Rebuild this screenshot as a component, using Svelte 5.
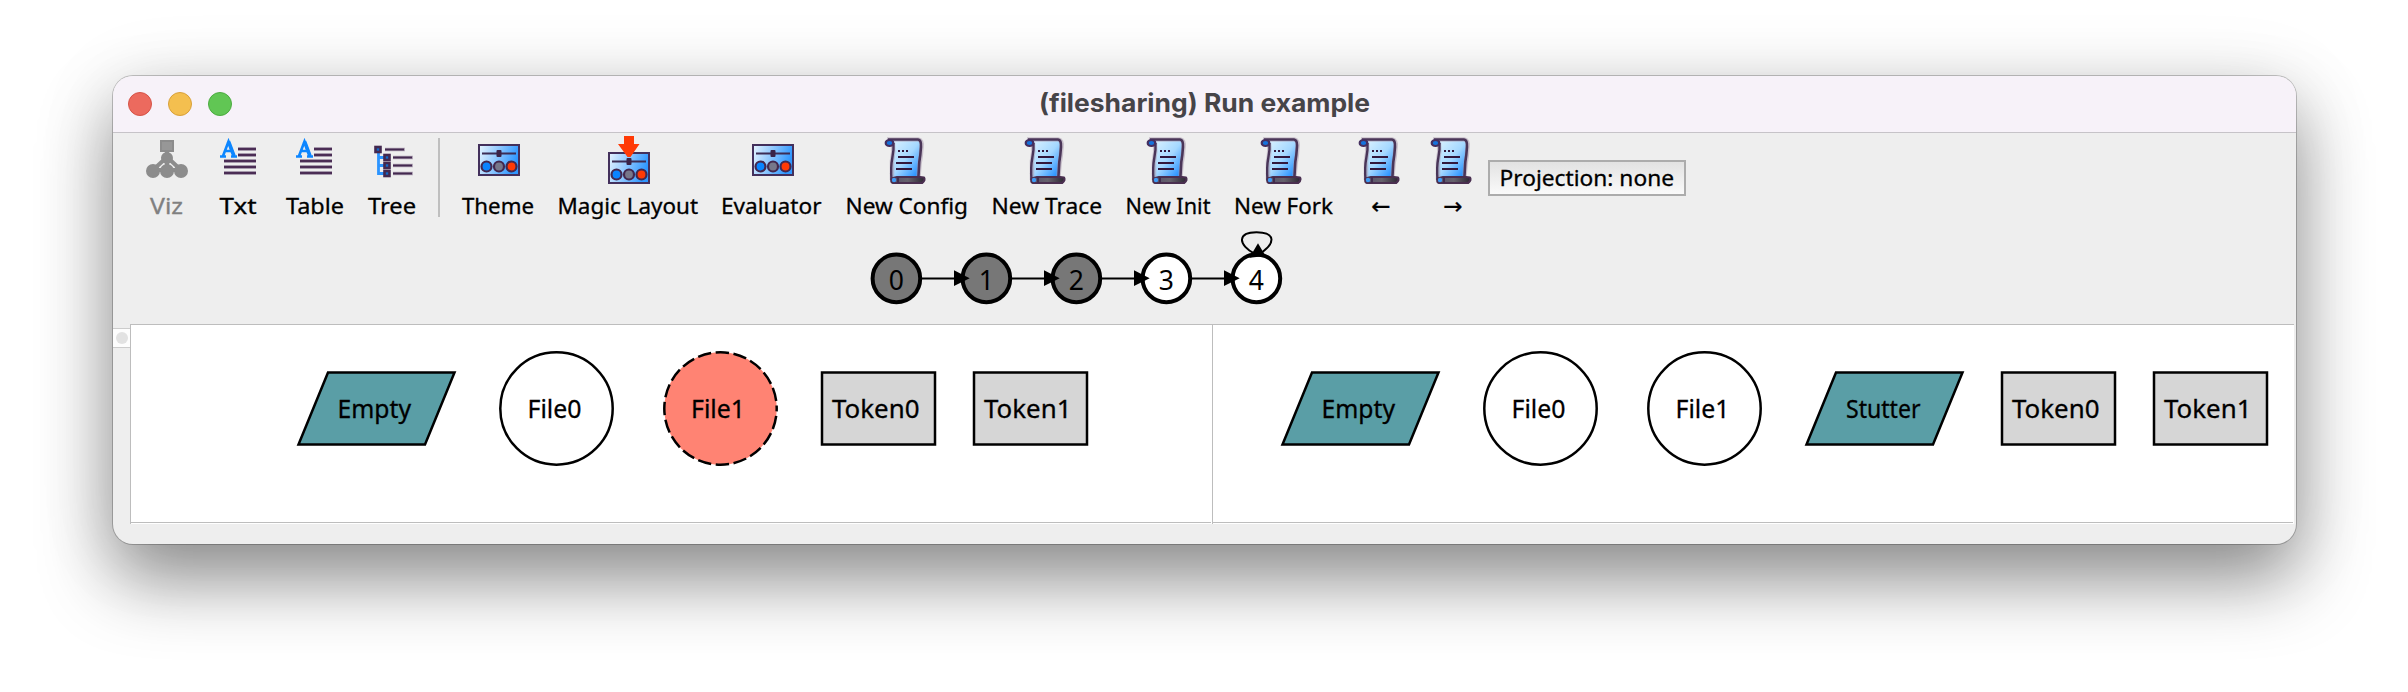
<script>
  const tools = [
    { label: 'Viz', icon: 'viz', x: 140, w: 68, ix: 146, tx: 150, tw: 33, disabled: true },
    { label: 'Txt', icon: 'txt', x: 208, w: 68, ix: 220, tx: 219.5, tw: 37 },
    { label: 'Table', icon: 'txt', x: 276, w: 80, ix: 296, tx: 286, tw: 58 },
    { label: 'Tree', icon: 'tree', x: 356, w: 72, ix: 374, tx: 368, tw: 48 },
    { sep: true, x: 428, w: 22 },
    { label: 'Theme', icon: 'panel', x: 450, w: 98, ix: 478, tx: 462, tw: 72 },
    { label: 'Magic Layout', icon: 'magic', x: 548, w: 162, ix: 608, tx: 557.5, tw: 140.5 },
    { label: 'Evaluator', icon: 'panel', x: 710, w: 124, ix: 752, tx: 721, tw: 100.5 },
    { label: 'New Config', icon: 'scroll', x: 834, w: 146, ix: 880, tx: 845.5, tw: 122.5 },
    { label: 'New Trace', icon: 'scroll', x: 980, w: 134, ix: 1020, tx: 991.5, tw: 110.5 },
    { label: 'New Init', icon: 'scroll', x: 1114, w: 108, ix: 1142, tx: 1125.5, tw: 85 },
    { label: 'New Fork', icon: 'scroll', x: 1222, w: 124, ix: 1256, tx: 1234, tw: 99 },
    { label: '←', icon: 'scroll', x: 1346, w: 72, ix: 1354, arrow: 1372 },
    { label: '→', icon: 'scroll', x: 1418, w: 70, ix: 1426, arrow: 1444 }
  ];

  const states = [0, 1, 2, 3, 4];

  const left = [
    { kind: 'para', x: 298.5, label: 'Empty', tx: 337.5, tw: 73.5 },
    { kind: 'circle', x: 556.5, label: 'File0', tx: 527.5, tw: 54 },
    { kind: 'circle', x: 720.5, label: 'File1', tx: 691, tw: 54, dashed: true },
    { kind: 'box', x: 822, label: 'Token0', tx: 832, tw: 87.5 },
    { kind: 'box', x: 974, label: 'Token1', tx: 984, tw: 87.5 }
  ];
  const right = [
    { kind: 'para', x: 1282.5, label: 'Empty', tx: 1321.5, tw: 73.5 },
    { kind: 'circle', x: 1540.5, label: 'File0', tx: 1511.5, tw: 54 },
    { kind: 'circle', x: 1704.5, label: 'File1', tx: 1675.5, tw: 54 },
    { kind: 'para', x: 1806.5, label: 'Stutter', tx: 1846, tw: 74.5 },
    { kind: 'box', x: 2002, label: 'Token0', tx: 2012, tw: 87.5 },
    { kind: 'box', x: 2154, label: 'Token1', tx: 2164, tw: 87.5 }
  ];
</script>

{#snippet panelIcon()}
  <rect x="1" y="1" width="40" height="30" fill="url(#sky)" stroke="#43305c" stroke-width="2" />
  <path d="M4 9.5H38" stroke="#3c2d55" stroke-width="2.2" />
  <rect x="18.5" y="6" width="5" height="7" rx="1" fill="#3a2347" />
  <circle cx="8.5" cy="22.5" r="5" fill="#0a84ff" stroke="#43284f" stroke-width="2.2" />
  <circle cx="21" cy="22.5" r="5" fill="#77778a" stroke="#43284f" stroke-width="2.2" />
  <circle cx="33.5" cy="22.5" r="5" fill="#ff3a06" stroke="#43284f" stroke-width="2.2" />
{/snippet}

{#snippet icon(name)}
  {#if name === 'viz'}
    <g transform="translate(0 7)" fill="#8c8c8c" stroke="#8c8c8c">
      <rect x="15" y="1" width="12" height="10" stroke-width="2" fill="#979797" />
      <path d="M21 11V26M21 17L7 30M21 17L35 30M7 30H35" stroke-width="4" fill="none" />
      <circle cx="21" cy="18" r="5" stroke-width="2" />
      <circle cx="7" cy="31" r="6" stroke-width="2" />
      <circle cx="21" cy="31" r="6" stroke-width="2" />
      <circle cx="35" cy="31" r="6" stroke-width="2" />
    </g>
  {:else if name === 'txt'}
    <g transform="translate(0 7)" fill="none">
      <path d="M18 9H36M18 15H36M4 21H36M4 27H36M4 33H36" stroke="#a79bad" stroke-width="4" />
      <path d="M18 9H36M18 15H36M4 21H36M4 27H36M4 33H36" stroke="#4b2d55" stroke-width="2" />
      <path d="M3 16L8.5 1.5L14 16M5 11H12M0 16.5H6M11 16.5H17" stroke="#0d86ff" stroke-width="2.6" />
      <path d="M8.5 1.5L14 16" stroke="#0d86ff" stroke-width="3.6" />
    </g>
  {:else if name === 'tree'}
    <g transform="translate(0 11)" fill="none">
      <path d="M11 5.5H31M19 13.5H39M19 21.5H39M19 29.5H39" stroke="#b2a7b8" stroke-width="3.6" />
      <path d="M11 5.5H30M19 13.5H38M19 21.5H38M19 29.5H38" stroke="#43284f" stroke-width="2" />
      <path d="M4.5 9V31M4 13.5H11M4 21.5H11M4 29.5H11" stroke="#2b94ff" stroke-width="2.8" />
      <rect x="1.5" y="3" width="5" height="5" fill="#1268c8" stroke="#43284f" stroke-width="2.6" />
      <rect x="10.5" y="11" width="5" height="5" fill="#1268c8" stroke="#43284f" stroke-width="2.6" />
      <rect x="10.5" y="19" width="5" height="5" fill="#1268c8" stroke="#43284f" stroke-width="2.6" />
      <rect x="10.5" y="27" width="5" height="5" fill="#1268c8" stroke="#43284f" stroke-width="2.6" />
    </g>
  {:else if name === 'panel'}
    <g transform="translate(0 11)">{@render panelIcon()}</g>
  {:else if name === 'magic'}
    <g transform="translate(0 19)">{@render panelIcon()}</g>
    <path d="M16 3H26V11H31.5L22.5 24H19.5L10 11H16Z" fill="#ff3a06" />
  {:else if name === 'scroll'}
    <g transform="translate(0 1)">
      <path d="M8 5.5H38Q42 6 41.500 12Q41.200 20 40 27L38 43H12L11.500 30L13.500 10Z" fill="url(#paper)" />
      <path d="M7 5.500H38Q42.500 6 41.500 13Q41 22 39.500 30L38.500 42M13 9Q14 18 12 27V46" fill="none" stroke="#a99aae" stroke-width="4.500" opacity="0.55" />
      <path d="M8 5.500H38Q41.500 6 41 13Q40.500 21 39.300 28L38.500 42" fill="none" stroke="#4a3558" stroke-width="2.600" stroke-linejoin="round" />
      <path d="M13.500 9Q14 16 12.300 24Q10.500 33 11.500 46" fill="none" stroke="#4a3558" stroke-width="2.400" />
      <ellipse cx="9.500" cy="9" rx="3.800" ry="3" fill="#1673dd" stroke="#453060" stroke-width="2.200" />
      <path d="M17 43H40L44 43.500Q45.500 46.500 42 49H13Q10.500 48 11.500 44.500Z" fill="url(#roll)" stroke="#4a2f50" stroke-width="2.200" stroke-linejoin="round" />
      <circle cx="14" cy="46" r="2.200" fill="#3e9bf5" />
      <path d="M18 43.500V48.500" stroke="#3a2347" stroke-width="1.600" />
      <path d="M18 17H20M22 17H24M26 17H28M18 23H34M16 29H32M16 35H32" stroke="#32183c" stroke-width="2" />
    </g>
  {/if}
{/snippet}

{#snippet node(n)}
  {#if n.kind === 'para'}
    <path d="M{n.x + 29.5} 372.5H{n.x + 156}L{n.x + 126.500} 444.5H{n.x}Z" fill="#5a9ea6" class="outline" />
  {:else if n.kind === 'circle'}
    <circle cx={n.x} cy="408.500" r="56.2" fill={n.dashed ? '#ff8373' : '#fff'} class="outline" class:dashed={n.dashed} />
  {:else}
    <rect x={n.x} y="372.5" width="113" height="72" fill="#d6d6d6" class="outline" />
  {/if}
  <text x={n.tx} y="417.7" textLength={n.tw} lengthAdjust="spacingAndGlyphs" class="nodetext">{n.label}</text>
{/snippet}

<svg class="defs" width="0" height="0" aria-hidden="true">
  <defs>
    <linearGradient id="sky" x1="0" y1="0" x2="1" y2="0.25">
      <stop offset="0" stop-color="#e8f5ff" />
      <stop offset="0.5" stop-color="#8fc8ff" />
      <stop offset="1" stop-color="#2f97ff" />
    </linearGradient>
    <linearGradient id="paper" x1="0.1" y1="0.1" x2="1" y2="0.9">
      <stop offset="0" stop-color="#d8f1ff" />
      <stop offset="0.5" stop-color="#a5d8ff" />
      <stop offset="1" stop-color="#1688ff" />
    </linearGradient>
    <linearGradient id="roll" x1="0" y1="0" x2="1" y2="0">
      <stop offset="0" stop-color="#55506a" />
      <stop offset="0.5" stop-color="#66626c" />
      <stop offset="1" stop-color="#2d2733" />
    </linearGradient>
  </defs>
</svg>

<main class="desktop">
  <section class="window">
    <header class="titlebar">
      <div class="lights"><i class="close"></i><i class="min"></i><i class="max"></i></div>
      <svg class="title" width="340" height="56"><text x="5" y="35.700" textLength="331" lengthAdjust="spacingAndGlyphs">(filesharing) Run example</text></svg>
    </header>

    <nav class="toolbar">
      {#each tools as t}
        {#if t.sep}
          <span class="sep"></span>
        {:else}
          <button class="tool" class:disabled={t.disabled} aria-label={t.label}>
            <svg width={t.w} height="90" viewBox="{t.x} 0 {t.w} 90">
              <g transform="translate({t.ix} 0)">{@render icon(t.icon)}</g>
              {#if t.arrow}
                <text x={t.arrow + 9} y="81" text-anchor="middle" class="arrow">{t.label}</text>
              {:else}
                <text x={t.tx} y="80.800" textLength={t.tw} lengthAdjust="spacingAndGlyphs">{t.label}</text>
              {/if}
            </svg>
          </button>
        {/if}
      {/each}
      <button class="projection" aria-label="Projection: none">
        <svg width="194" height="32"><text x="9.500" y="23.600" textLength="174.500" lengthAdjust="spacingAndGlyphs">Projection: none</text></svg>
      </button>
    </nav>

    <div class="trace">
      <svg width="440" height="100" viewBox="860 223 440 100">
        {#each states as s}
          <circle cx={896.4 + s * 90} cy="278.400" r="23.8" fill={s < 3 ? '#777' : '#fff'} stroke="#000" stroke-width="4" />
          <text x={896.4 + s * 90} y="290" text-anchor="middle">{s}</text>
        {/each}
        {#each states.slice(1) as s}
          <path d="M{832 + s * 90} 278.500H{866 + s * 90}" stroke="#000" stroke-width="2" />
          <path d="M{864 + s * 90} 270.200L{879.700 + s * 90} 278.200L{864 + s * 90} 286Z" />
        {/each}
        <path d="M1255 254C1247 250 1241.500 244 1242 239.500C1242.500 234 1248 232.200 1256.500 232.200C1265 232.200 1271 234 1271.500 239.500C1271.500 245 1266 249 1260 254" fill="none" stroke="#000" stroke-width="2" />
        <path d="M1258 243.200L1265.500 256L1249.500 257.700Z" />
      </svg>
    </div>

    <div class="body">
      <aside class="rail"><span class="handle"><i></i></span></aside>
      <div class="pane first">
        <svg width="1080" height="197" viewBox="131 325 1080 197">
          {#each left as n}{@render node(n)}{/each}
        </svg>
      </div>
      <div class="pane">
        <svg width="1080" height="197" viewBox="1213 325 1080 197">
          {#each right as n}{@render node(n)}{/each}
        </svg>
      </div>
    </div>
  </section>
</main>

<style>
  :global(body) { background: #fff; overflow: hidden; }
  .defs { position: absolute; }
  svg { display: block; }
  .desktop {
    box-sizing: border-box;
    width: 2408px;
    height: 692px;
    padding: 76px 112px 0 113px;
    overflow: hidden;
    font-family: "Noto Sans", "Open Sans", sans-serif;
  }
  .window {
    width: 2183px;
    height: 468px;
    border-radius: 20px;
    overflow: hidden;
    background: #eee;
    box-shadow: 0 0 0 1px rgba(0, 0, 0, 0.22), 0 36px 72px rgba(0, 0, 0, 0.42), 0 8px 80px rgba(0, 0, 0, 0.1);
    display: flex;
    flex-direction: column;
  }
  .titlebar {
    box-sizing: border-box;
    height: 57px;
    flex: none;
    background: #f7f2f9;
    border-bottom: 1px solid #c6c3c8;
    display: flex;
    align-items: center;
  }
  .lights { display: flex; gap: 16px; padding-left: 15px; width: 906px; }
  .lights i {
    box-sizing: border-box;
    width: 24px;
    height: 24px;
    border-radius: 50%;
    border-width: 1px;
    border-style: solid;
  }
  .close { background: #ec6a5e; border-color: #d55347; }
  .min { background: #f4bf4f; border-color: #d8a03a; }
  .max { background: #61c654; border-color: #4cab40; }
  .title text { font: 700 25.500px Inter, sans-serif; fill: #464448; }
  .toolbar { display: flex; height: 90px; flex: none; padding-left: 27px; }
  button { padding: 0; margin: 0; border: 0; background: none; display: block; font-family: inherit; flex: none; }
  .tool text, .projection text { font-size: 22.500px; fill: #000; stroke: #000; stroke-width: 0.3; }
  .tool.disabled text { fill: #808080; stroke: #808080; }
  .tool .arrow { font-family: "DejaVu Sans", sans-serif; font-size: 23px; }
  .sep { width: 2px; height: 79px; margin: 5px 10px 0; background: #bfbfbf; flex: none; }
  .projection {
    width: 198px;
    height: 36px;
    margin-top: 27px;
    border: 2px solid #acacac;
    background: linear-gradient(#e2e2e2, #fafafa);
  }
  .trace { height: 101px; flex: none; padding-left: 747px; }
  .trace text { font-size: 26.500px; }
  .body { display: flex; height: 200px; flex: none; }
  .rail { width: 17px; padding-top: 4px; flex: none; }
  .handle {
    box-sizing: border-box;
    display: flex;
    align-items: center;
    justify-content: center;
    width: 17px;
    height: 20px;
    background: #fdfdfd;
    border-top: 1px solid #ccc;
    border-bottom: 1px solid #ccc;
  }
  .handle i { width: 12px; height: 12px; border-radius: 50%; background: #e2e2e2; }
  .pane {
    box-sizing: border-box;
    width: 1082px;
    height: 200px;
    background: #fff;
    border: solid #bdbdbd;
    border-width: 1px 0 0 1px;
    flex: none;
  }
  .pane svg { border-bottom: 1px solid #bdbdbd; }
  .outline { stroke: #000; stroke-width: 2.5; }
  .dashed { stroke-dasharray: 13.500 4.500; stroke-dashoffset: 10.500; }
  .nodetext { font-size: 24.500px; fill: #000; stroke: #000; stroke-width: 0.3; }
</style>
